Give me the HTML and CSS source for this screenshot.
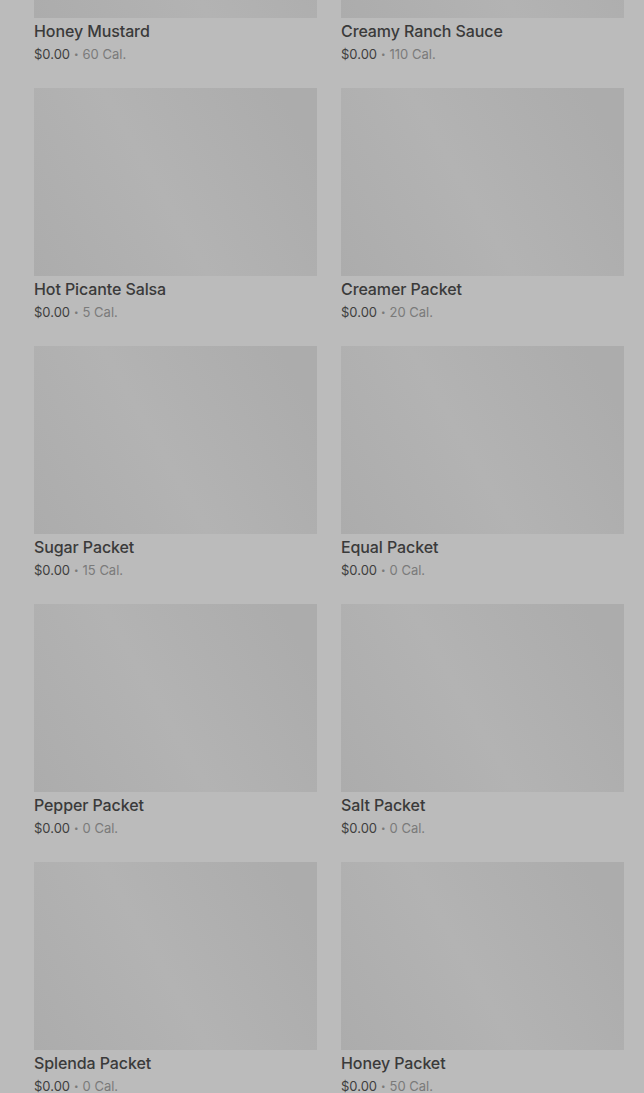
FILE: index.html
```html
<!DOCTYPE html>
<html lang="en">
<head>
    <meta charset="UTF-8">
    <meta name="viewport" content="width=device-width, initial-scale=1.0">
    <title>Condiments</title>
    <link rel="stylesheet" href="styles.css">
</head>
<body>
    <main class="menu">
        <div class="item-grid">
            <div class="item">
                <div class="item-image"></div>
                <h3 class="item-name">Honey Mustard</h3>
                <p class="item-meta"><span class="price">$0.00</span><span class="dot">•</span><span class="cal">60 Cal.</span></p>
            </div>
            <div class="item">
                <div class="item-image"></div>
                <h3 class="item-name">Creamy Ranch Sauce</h3>
                <p class="item-meta"><span class="price">$0.00</span><span class="dot">•</span><span class="cal">110 Cal.</span></p>
            </div>
            <div class="item">
                <div class="item-image"></div>
                <h3 class="item-name">Hot Picante Salsa</h3>
                <p class="item-meta"><span class="price">$0.00</span><span class="dot">•</span><span class="cal">5 Cal.</span></p>
            </div>
            <div class="item">
                <div class="item-image"></div>
                <h3 class="item-name">Creamer Packet</h3>
                <p class="item-meta"><span class="price">$0.00</span><span class="dot">•</span><span class="cal">20 Cal.</span></p>
            </div>
            <div class="item">
                <div class="item-image"></div>
                <h3 class="item-name">Sugar Packet</h3>
                <p class="item-meta"><span class="price">$0.00</span><span class="dot">•</span><span class="cal">15 Cal.</span></p>
            </div>
            <div class="item">
                <div class="item-image"></div>
                <h3 class="item-name">Equal Packet</h3>
                <p class="item-meta"><span class="price">$0.00</span><span class="dot">•</span><span class="cal">0 Cal.</span></p>
            </div>
            <div class="item">
                <div class="item-image"></div>
                <h3 class="item-name">Pepper Packet</h3>
                <p class="item-meta"><span class="price">$0.00</span><span class="dot">•</span><span class="cal">0 Cal.</span></p>
            </div>
            <div class="item">
                <div class="item-image"></div>
                <h3 class="item-name">Salt Packet</h3>
                <p class="item-meta"><span class="price">$0.00</span><span class="dot">•</span><span class="cal">0 Cal.</span></p>
            </div>
            <div class="item">
                <div class="item-image"></div>
                <h3 class="item-name">Splenda Packet</h3>
                <p class="item-meta"><span class="price">$0.00</span><span class="dot">•</span><span class="cal">0 Cal.</span></p>
            </div>
            <div class="item">
                <div class="item-image"></div>
                <h3 class="item-name">Honey Packet</h3>
                <p class="item-meta"><span class="price">$0.00</span><span class="dot">•</span><span class="cal">50 Cal.</span></p>
            </div>
        </div>
    </main>
</body>
</html>
```

FILE: styles.css
```css
body {
    margin: 0;
    padding: 0;
    background-color: #bbbbbb;
    font-family: Inter, "Noto Sans", Arial, sans-serif;
    overflow: hidden;
}

.menu {
    padding: 0 20px 0 34px;
}

/* page is scrolled, first row is cut off at the top */
.item-grid {
    display: grid;
    grid-template-columns: 283px 283px;
    column-gap: 24px;
    row-gap: 24px;
    margin-top: -170px;
}

.item-image {
    height: 188px;
    background: linear-gradient(60deg, #acacac 0%, #b3b3b3 45%, #acacac 90%);
}

.item-name {
    margin: 3px 0 0;
    font-size: 16px;
    font-weight: 500;
    line-height: 20px;
    letter-spacing: -0.1px;
    color: #3a3a3a;
}

.item-meta {
    margin: 4px 0 0;
    font-size: 13px;
    line-height: 19px;
    color: #7a7a7a;
}

.price {
    color: #3e3e3e;
}

.dot {
    font-size: 8px;
    margin: 0 4px;
    vertical-align: 2px;
}
```
